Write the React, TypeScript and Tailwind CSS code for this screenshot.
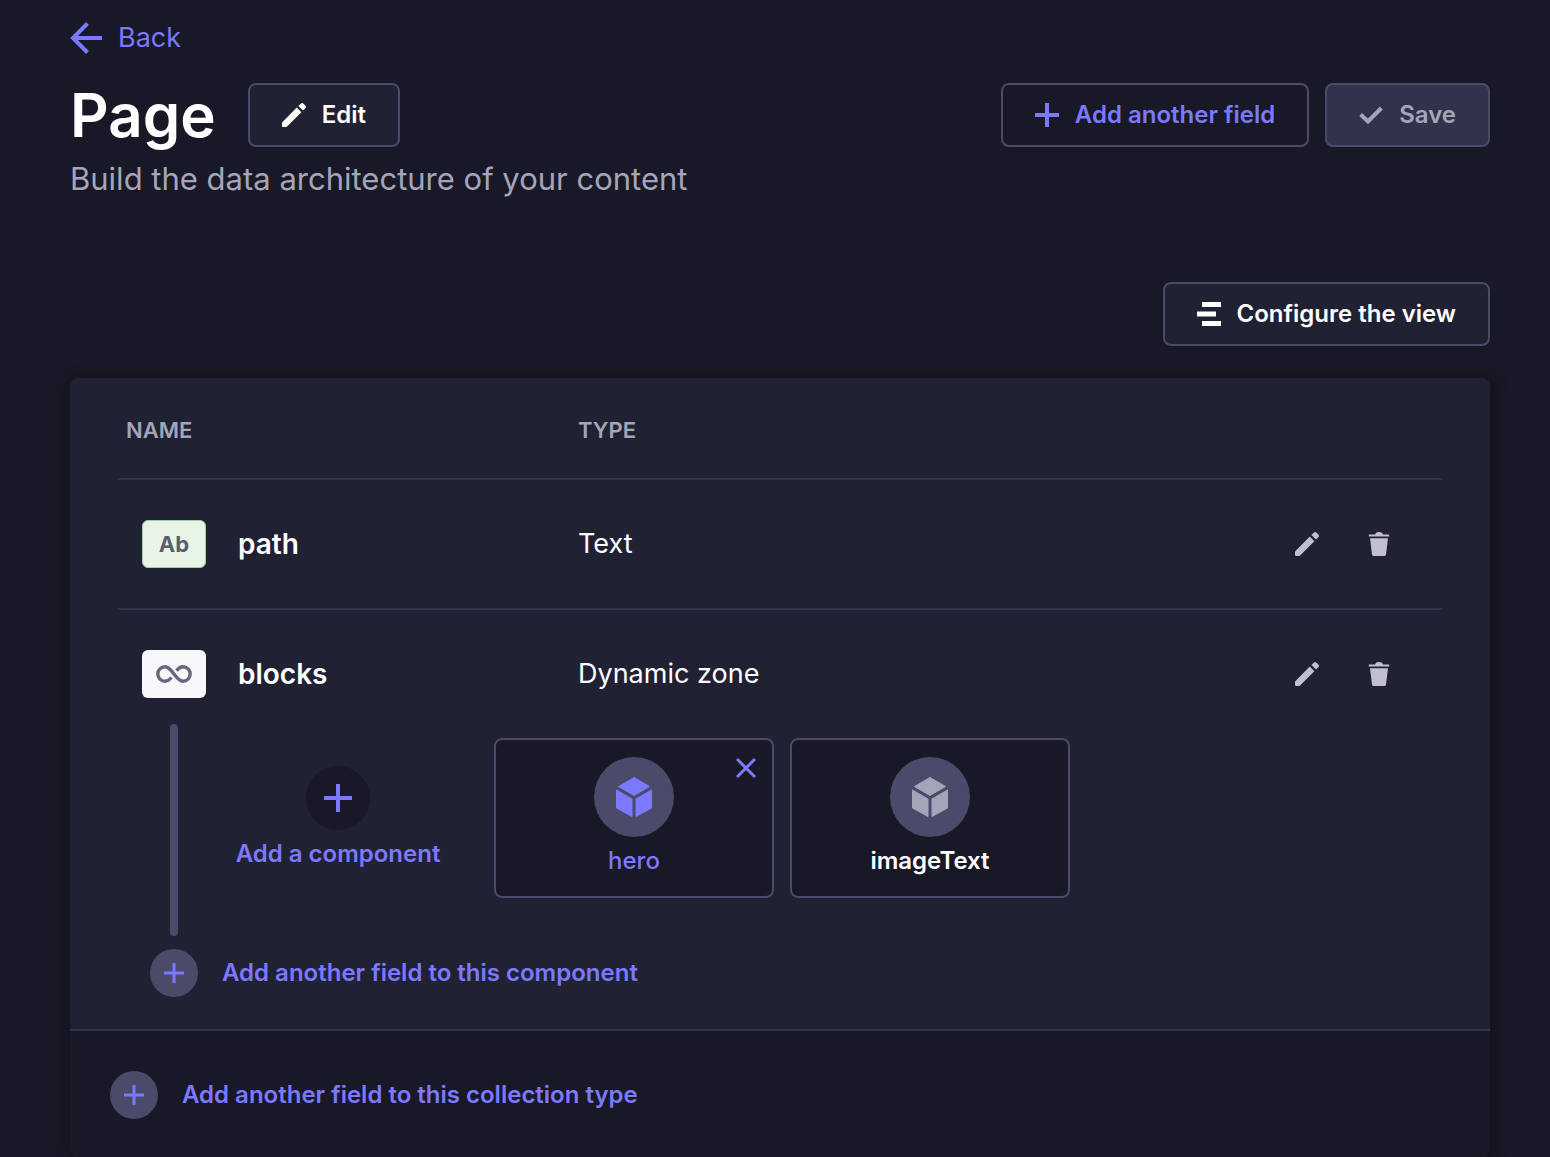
import type { ReactNode } from "react";

type FieldKind = "text" | "dynamiczone";

interface Field {
  name: string;
  type: string;
  kind: FieldKind;
}

const FIELDS: Field[] = [
  { name: "path", type: "Text", kind: "text" },
  { name: "blocks", type: "Dynamic zone", kind: "dynamiczone" },
];

const COMPONENTS = [
  { name: "hero", active: true },
  { name: "imageText", active: false },
];

function ArrowLeftIcon() {
  return (
    <svg width="32" height="32" viewBox="0 0 32 32" fill="none" stroke="currentColor" strokeWidth="4">
      <path d="M32 16H4M17.5 1.5L3 16l14.5 14.5" />
    </svg>
  );
}

function PencilIcon() {
  return (
    <svg width="24" height="24" viewBox="0 0 24 24" fill="currentColor">
      <path d="M0 19.4 14.8 4.6l4.600 4.600L4.600 24H1a1 1 0 0 1-1-1v-3.600Z" />
      <path d="m16.400 3 2.300-2.300a2 2 0 0 1 2.800 0l1.800 1.800a2 2 0 0 1 0 2.800L21 7.600 16.400 3Z" />
    </svg>
  );
}

function TrashIcon() {
  return (
    <svg width="24" height="24" viewBox="0 0 24 24" fill="currentColor">
      <path d="M1.8 2.4h6.4C8.6.8 9.8 0 12 0s3.400.8 3.800 2.400h6.400v2.200H1.800V2.400Z" />
      <path d="M3 6.200h18L19 22.500c-.1.900-.8 1.500-1.700 1.500H6.700c-.9 0-1.600-.6-1.700-1.500L3 6.200Z" />
    </svg>
  );
}

function PlusIcon({ size, stroke }: { size: number; stroke: number }) {
  return (
    <svg width={size} height={size} viewBox={`0 0 ${size} ${size}`} stroke="currentColor" strokeWidth={stroke}>
      <path d={`M${size / 2} 0V${size}M0 ${size / 2}H${size}`} />
    </svg>
  );
}

function CheckIcon() {
  return (
    <svg width="24" height="24" viewBox="0 0 24 24" fill="none" stroke="currentColor" strokeWidth="4">
      <path d="M1.600 11.500 9 18.500 22.400 5" />
    </svg>
  );
}

function LayoutIcon() {
  return (
    <svg width="24" height="24" viewBox="0 0 24 24" fill="currentColor">
      <path d="M5 0h19v5H5zM0 9.500h19v5H0zM5 19h19v5H5z" />
    </svg>
  );
}

function CrossIcon() {
  return (
    <svg width="20" height="20" viewBox="0 0 20 20" stroke="currentColor" strokeWidth="3">
      <path d="M1 1l18 18M19 1L1 19" />
    </svg>
  );
}

function CubeIcon() {
  return (
    <svg width="40" height="40" viewBox="0 0 40 40" fill="currentColor" stroke="currentColor" strokeWidth="1" strokeLinejoin="round">
      <path d="M20 .5 35.500 9.500 20 18.500 4.500 9.500Z" />
      <path d="M2.500 13 18 22v17.500L2.500 31Z" />
      <path d="M37.500 13 22 22v17.500L37.500 31Z" />
    </svg>
  );
}

function InfinityIcon() {
  return (
    <svg width="36" height="18" viewBox="0 0 36 18" fill="none" stroke="currentColor" strokeWidth="3.400">
      <path d="M15.500 12.500C13.500 14.800 11.800 16.200 9 16.200a7.200 7.200 0 0 1 0-14.400c7.500 0 10.500 14.400 18 14.400a7.200 7.200 0 0 0 0-14.400c-2.800 0-4.500 1.500-6.500 3.800" />
    </svg>
  );
}

function FieldBadge({ kind }: { kind: FieldKind }) {
  if (kind === "text") {
    return (
      <span className="flex h-12 w-16 items-center justify-center rounded-md border border-[#a3cfa3] bg-[#e8f4e6] text-[22px] font-bold text-[#55606a]">
        Ab
      </span>
    );
  }
  return (
    <span className="flex h-12 w-16 items-center justify-center rounded-md bg-[#f8f8fb] text-[#666680]">
      <InfinityIcon />
    </span>
  );
}

function Button({
  icon,
  children,
  className,
  disabled,
}: {
  icon: ReactNode;
  children: ReactNode;
  className: string;
  disabled?: boolean;
}) {
  return (
    <button
      type="button"
      disabled={disabled}
      className={`flex h-16 items-center gap-4 rounded-lg border-2 border-[#4a4a6a] px-8 text-2xl font-semibold whitespace-nowrap ${className}`}
    >
      {icon}
      {children}
    </button>
  );
}

function AddFieldButton({ children }: { children: ReactNode }) {
  return (
    <button type="button" className="flex items-center gap-6 text-2xl font-semibold text-[#7b79ff]">
      <span className="flex size-12 items-center justify-center rounded-full bg-[#4a4a6a]">
        <PlusIcon size={20} stroke={3} />
      </span>
      {children}
    </button>
  );
}

function ComponentCard({ name, active }: { name: string; active: boolean }) {
  return (
    <div className="relative h-40 w-[280px] rounded-lg border-2 border-[#4a4a6a] bg-[#181826]">
      <button
        type="button"
        className={`flex size-full flex-col items-center pt-[17px] text-2xl ${
          active ? "font-medium text-[#7b79ff]" : "font-semibold text-white"
        }`}
      >
        <span
          className={`mb-2 flex size-20 items-center justify-center rounded-full bg-[#4a4a6a] ${
            active ? "text-[#7b79ff]" : "text-[#a5a5ba]"
          }`}
        >
          <CubeIcon />
        </span>
        {name}
      </button>
      {active && (
        <button type="button" aria-label={`Remove ${name}`} className="absolute top-[18px] right-4 text-[#7b79ff]">
          <CrossIcon />
        </button>
      )}
    </div>
  );
}

function FieldRow({ field }: { field: Field }) {
  const isZone = field.kind === "dynamiczone";
  const cell = isZone ? "pt-10 pb-[26px]" : "border-b-2 border-[#32324d] py-10";

  return (
    <tr>
      <td className={cell}>
        <div className="flex items-center gap-8 pl-6 text-[28px] font-semibold">
          <FieldBadge kind={field.kind} />
          {field.name}
        </div>
      </td>
      <td className={cell}>{field.type}</td>
      <td className={cell}>
        <div className="flex justify-end gap-6 pr-[39px] text-[#c0c0cf]">
          <button type="button" aria-label={`Edit ${field.name}`} className="p-3">
            <PencilIcon />
          </button>
          <button type="button" aria-label={`Delete ${field.name}`} className="p-3">
            <TrashIcon />
          </button>
        </div>
      </td>
    </tr>
  );
}

function DynamicZone() {
  return (
    <>
      <div className="flex h-[212px] pl-[52px]">
        <div className="w-2 rounded-full bg-[#4a4a6a]" />
        <div className="flex gap-4 pt-[14px]">
          <button
            type="button"
            className="mr-2 ml-7 flex w-[264px] flex-col items-center pt-7 text-2xl font-semibold text-[#7b79ff]"
          >
            <span className="mb-2 flex size-16 items-center justify-center rounded-full bg-[#181826]">
              <PlusIcon size={28} stroke={4} />
            </span>
            Add a component
          </button>
          {COMPONENTS.map((c) => (
            <ComponentCard key={c.name} name={c.name} active={c.active} />
          ))}
        </div>
      </div>
      <div className="pt-[13px] pb-8 pl-8">
        <AddFieldButton>Add another field to this component</AddFieldButton>
      </div>
    </>
  );
}

export default function App() {
  return (
    <div className="min-h-screen bg-[#181826] pr-[60px] pl-[70px] font-['Inter',sans-serif] text-white">
      <header className="pt-5">
        <a href="#" className="flex w-fit items-center gap-4 text-[27px] leading-9 text-[#7b79ff]">
          <ArrowLeftIcon />
          Back
        </a>
        <div className="mt-[27px] flex items-center justify-between">
          <div className="flex items-center gap-8">
            <h1 className="text-[60px] leading-16 font-semibold">Page</h1>
            <Button icon={<PencilIcon />} className="bg-[#212134]">
              Edit
            </Button>
          </div>
          <div className="flex gap-4">
            <Button icon={<PlusIcon size={24} stroke={4} />} className="text-[#7b79ff]">
              Add another field
            </Button>
            <Button icon={<CheckIcon />} disabled className="bg-[#32324d] text-[#a5a5ba]">
              Save
            </Button>
          </div>
        </div>
        <p className="mt-3 text-[31px] leading-10 text-[#a5a5ba]">Build the data architecture of your content</p>
      </header>

      <div className="mt-[83px] flex justify-end">
        <Button icon={<LayoutIcon />} className="bg-[#212134]">
          Configure the view
        </Button>
      </div>

      <main className="mt-8 rounded-lg bg-[#212134] shadow-[2px_2px_16px_rgba(3,3,5,0.35)]">
        <div className="px-12">
          <table className="w-full table-fixed border-separate border-spacing-0 text-[27px] leading-9">
            <thead>
              <tr className="text-left text-[22px] leading-6 text-[#a5a5ba]">
                <th className="w-[460px] border-b-2 border-[#32324d] pt-10 pb-9 pl-2 font-semibold">NAME</th>
                <th className="border-b-2 border-[#32324d] pt-10 pb-9 font-semibold">TYPE</th>
                <th className="border-b-2 border-[#32324d]" />
              </tr>
            </thead>
            <tbody>
              {FIELDS.map((field) => (
                <FieldRow key={field.name} field={field} />
              ))}
              <tr>
                <td colSpan={3}>
                  <DynamicZone />
                </td>
              </tr>
            </tbody>
          </table>
        </div>
        <footer className="rounded-b-lg border-t-2 border-[#32324d] bg-[#181826] px-10 pt-10 pb-[38px]">
          <AddFieldButton>Add another field to this collection type</AddFieldButton>
        </footer>
      </main>
    </div>
  );
}
